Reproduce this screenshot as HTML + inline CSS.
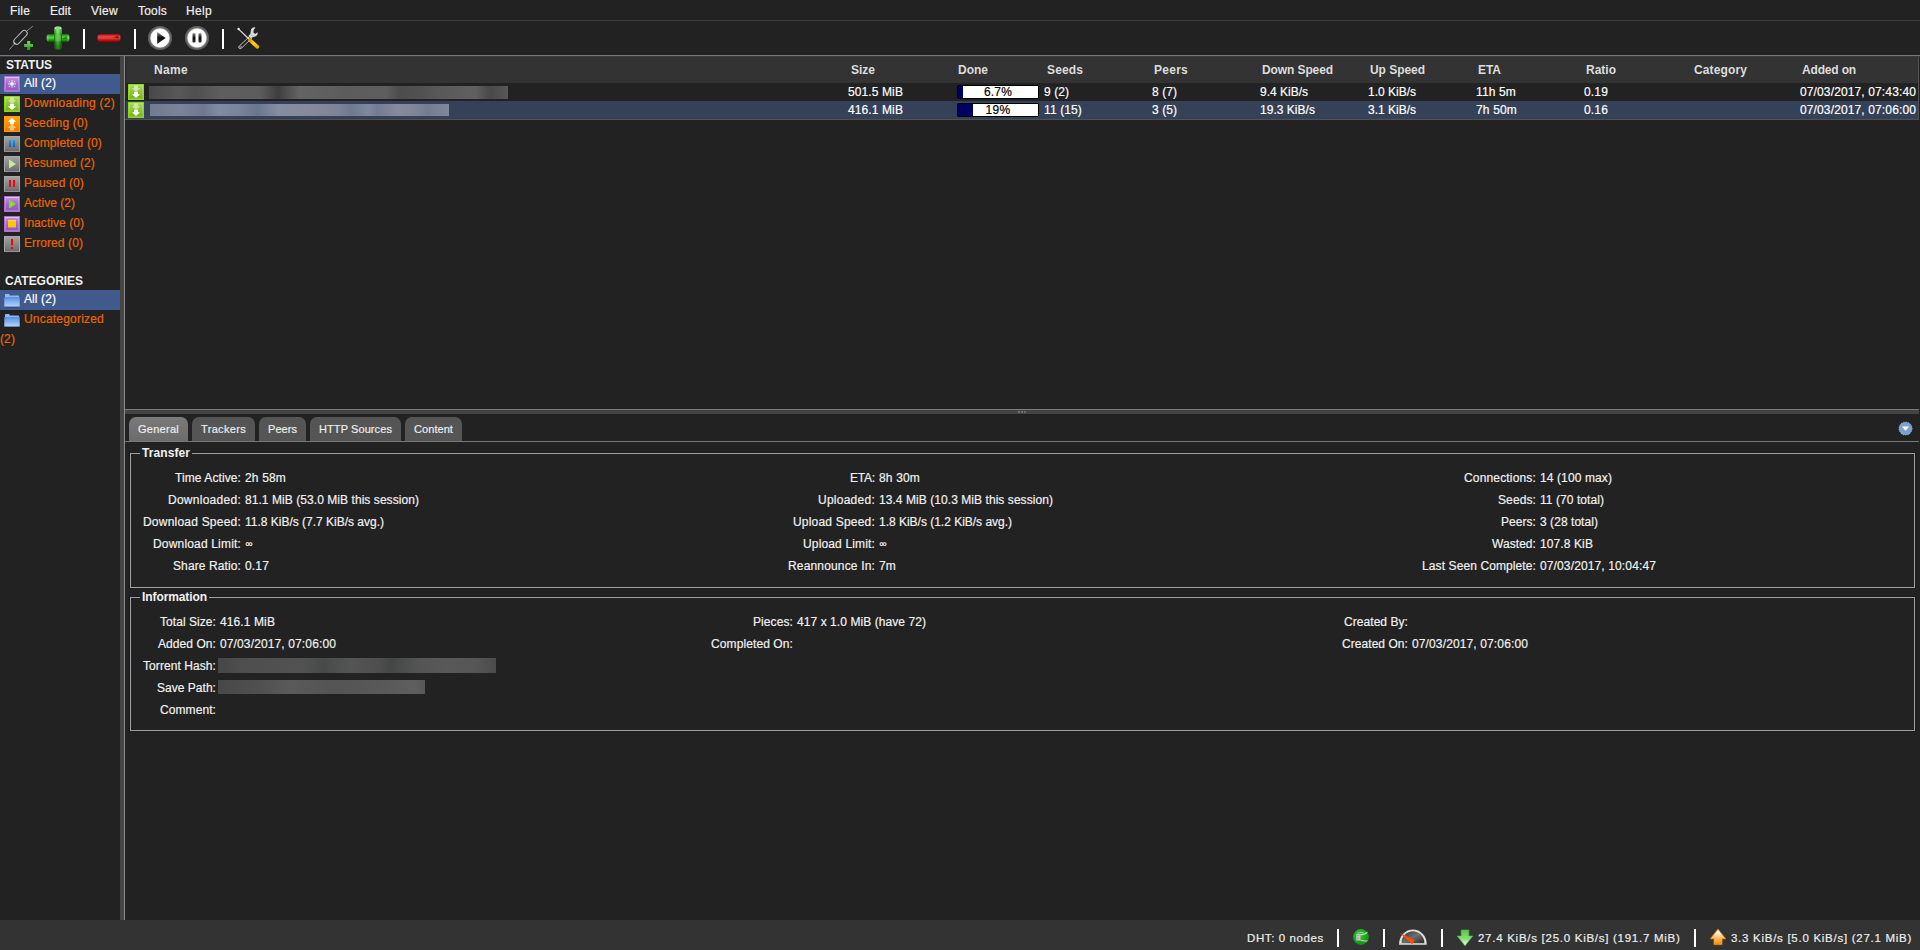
<!DOCTYPE html>
<html><head>
<meta charset="utf-8">
<title>qBittorrent Web UI</title>
<style>
*{box-sizing:border-box;margin:0;padding:0}
html,body{width:1920px;height:950px;overflow:hidden;background:#222;}
body{position:relative;font-family:"Liberation Sans",sans-serif;font-size:12px;color:#eee;line-height:16px;-webkit-text-stroke:0.18px;}
.abs{position:absolute}
/* menu */
#menubar{position:absolute;left:0;top:0;width:1920px;height:20px;background:#222;}
#menubar span{position:absolute;top:4px;color:#f0f0f0;font-size:12px;line-height:14px;white-space:nowrap}
#menuline{position:absolute;left:0;top:20px;width:1920px;height:1px;background:#3e3e3e}
#toolbar{position:absolute;left:0;top:21px;width:1920px;height:34px;background:#222}
.tdiv{position:absolute;top:29px;width:2px;height:20px;background:#fff}
#topline{z-index:5;position:absolute;left:0;top:55px;width:1920px;height:1px;background:#767676;box-shadow:0 1px 0 #3a3a3a}
/* sidebar */
#sidebar{position:absolute;left:0;top:56px;width:120px;height:864px;background:#222}
.shead{-webkit-text-stroke:0;position:absolute;left:6px;font-weight:bold;font-size:12px;color:#f0f0f0;line-height:14px;white-space:nowrap}
.sitem{position:absolute;left:0;width:120px;height:20px;color:#ee6600;white-space:nowrap;font-size:12px;line-height:14px}
.sitem.sel{background:#415a8d;color:#fff}
.sitem .ic{position:absolute;left:4px;top:2px;width:16px;height:16px}
.sitem .tx{position:absolute;left:24px;top:2px}
/* splitters */
#vsplit{z-index:6;position:absolute;left:120px;top:56px;width:4px;height:864px;background:#454545}
#vsplit2{z-index:6;position:absolute;left:124px;top:56px;width:1px;height:864px;background:#8c8c8c}
#hsplit{position:absolute;left:125px;top:409px;width:1794px;height:1px;background:#7a7a7a}
#hsplit2{position:absolute;left:125px;top:410px;width:1794px;height:4px;background:#444}
/* table */
#thead{position:absolute;left:126px;top:56px;width:1792px;height:27px;background:#333;border-top:1px solid #3a3a3a;border-left:1px solid #2b2b2b}
#thead span{-webkit-text-stroke:0;position:absolute;top:6px;margin-left:-1px;font-weight:bold;color:#ddd;font-size:12px;line-height:14px;white-space:nowrap}
.row{position:absolute;left:126px;width:1792px;height:18px;color:#fff;font-size:12px;line-height:14px}
.row span{position:absolute;top:2px;white-space:nowrap}
.row.sel{background:#354158}
.pbar{position:absolute;top:2px;left:831px;width:82px;height:14px;border:1px solid #000;border-radius:1px;background:#fff;color:#000;font-size:12px;line-height:12px;text-align:center}
.pbar i{position:absolute;left:0;top:0;height:12px;background:#000060}
.pbar b{position:absolute;left:0;top:0;width:80px;font-weight:normal;text-align:center}
.blur{position:absolute;filter:blur(1.2px)}
/* tabs */
.tab{position:absolute;top:417px;height:24px;border-radius:7px 7px 0 0;background:#555;color:#eee;font-size:11px;line-height:24px;text-align:center;white-space:nowrap}
.tab.sel{background:linear-gradient(#7a7a7a,#6c6c6c)}
#tabline{position:absolute;left:125px;top:441px;width:1794px;height:1px;background:#777}
/* fieldsets */
.fs{position:absolute;left:129px;width:1787px;border:1px solid #1b1b1b}
.fs:before{content:"";position:absolute;left:0;top:0;right:0;bottom:0;border:1px solid #a2a2a2}
.lg{-webkit-text-stroke:0;position:absolute;font-weight:bold;background:#222;padding:0 2px;color:#f2f2f2;font-size:12px;line-height:14px;white-space:nowrap}
.kv{position:absolute;white-space:nowrap;color:#f2f2f2;font-size:12px;line-height:14px}
.k{text-align:right}
/* footer */
#footer{position:absolute;left:0;top:920px;width:1920px;height:30px;background:#333}
.fdiv{position:absolute;top:929px;width:2px;height:18px;background:#fff}
.ft{position:absolute;top:931px;color:#eee;font-size:11.5px;line-height:14px;white-space:nowrap}
</style>
</head>
<body>

<svg width="0" height="0" style="position:absolute">
<defs>
<linearGradient id="pu" x1="0" y1="0" x2="0" y2="1"><stop offset="0" stop-color="#c692e6"></stop><stop offset="0.5" stop-color="#a468d0"></stop><stop offset="1" stop-color="#8e58ba"></stop></linearGradient>
<linearGradient id="gr" x1="0" y1="0" x2="0" y2="1"><stop offset="0" stop-color="#a8d85a"></stop><stop offset="1" stop-color="#72b214"></stop></linearGradient>
<linearGradient id="or" x1="0" y1="0" x2="0" y2="1"><stop offset="0" stop-color="#ffa60a"></stop><stop offset="1" stop-color="#f07a00"></stop></linearGradient>
<linearGradient id="gy2" x1="0" y1="0" x2="0" y2="1"><stop offset="0" stop-color="#a2a2a2"></stop><stop offset="1" stop-color="#6e6e6e"></stop></linearGradient>
<linearGradient id="bl2" x1="0" y1="0" x2="0" y2="1"><stop offset="0" stop-color="#00a8ff"></stop><stop offset="1" stop-color="#0058e0"></stop></linearGradient>
<linearGradient id="fo" x1="0" y1="0" x2="0" y2="1"><stop offset="0" stop-color="#5a8fe0"></stop><stop offset="1" stop-color="#b2d6ff"></stop></linearGradient>
<g id="sqpu"><rect x="0" y="0" width="16" height="16" fill="#b26cd4"></rect><rect x="1" y="1" width="14" height="14" fill="url(#pu)"></rect><rect x="1.5" y="1.5" width="13" height="13" fill="none" stroke="#fff" stroke-width="1" opacity="0.22"></rect><rect x="1" y="1" width="14" height="1" fill="#fff" opacity="0.3"></rect></g>
<g id="sqgr"><rect x="0" y="0" width="16" height="16" fill="#8cd812"></rect><rect x="1" y="1" width="14" height="14" fill="url(#gr)"></rect><rect x="1.5" y="1.5" width="13" height="13" fill="none" stroke="#fff" stroke-width="1" opacity="0.18"></rect></g>
<g id="sqor"><rect x="0" y="0" width="16" height="16" fill="#ff9c0c"></rect><rect x="1" y="1" width="14" height="14" fill="url(#or)"></rect></g>
<g id="sqgy"><rect x="0" y="0" width="16" height="16" fill="#a8a8a8"></rect><rect x="1" y="1" width="14" height="14" fill="url(#gy2)"></rect><rect x="0" y="15" width="16" height="1" fill="#929292"></rect></g>
<path id="arr" d="M6 0 h4 v2.5 h2.2 l-4.2 3.9 l-4.2 -3.9 h2.2z"></path>
<g id="i_dl"><use href="#sqgr"></use><use href="#arr" x="0" y="1.5" fill="#fff" opacity="0.5"></use><use href="#arr" x="0" y="7.7" fill="#fff"></use></g>
<g id="i_folder"><path d="M1 1.2 q0 -0.7 0.7 -0.7 h3 q0.7 0 0.9 0.7 l0.2 0.8 h8.6 q0.7 0 0.7 0.7 v1 h-14.1z" fill="#8db8f2"></path><rect x="0.3" y="3.6" width="15.4" height="9.6" rx="0.6" fill="url(#fo)"></rect><rect x="0.6" y="13.2" width="14.8" height="0.6" fill="#161616" opacity="0.6"></rect></g>
</defs>
</svg>
<!--MENUBAR-->
<div id="menubar">
<span style="left: 10px; letter-spacing: 0.164px;">File</span><span style="left: 50px; letter-spacing: 0.078px;">Edit</span><span style="left: 91px; letter-spacing: 0.301px;">View</span><span style="left: 138px; letter-spacing: 0.197px;">Tools</span><span style="left: 186px; letter-spacing: 0.328px;">Help</span>
</div>
<div id="menuline"></div>
<div id="toolbar"></div>
<!--TOOLBARICONS-->
<svg class="abs" style="left:9px;top:26px" width="24" height="24" viewBox="0 0 24 24">
<defs><linearGradient id="gsm" x1="0" y1="0" x2="0" y2="1"><stop offset="0" stop-color="#7fd96a"></stop><stop offset="1" stop-color="#1f9a12"></stop></linearGradient></defs>
<g filter="url(#bl)"><line x1="0.3" y1="23.7" x2="5.6" y2="17.6" stroke="#8e8e8e" stroke-width="1"></line><line x1="17.4" y1="5.3" x2="23.8" y2="0.2" stroke="#8e8e8e" stroke-width="1"></line>
<rect x="-8.4" y="-2.9" width="16.8" height="5.8" rx="2.9" fill="none" stroke="#b6b6b6" stroke-width="1.05" transform="translate(11.5,11.3) rotate(-46)"></rect><circle cx="5.6" cy="17.4" r="0.9" fill="#c8c8c8"></circle></g>
<path d="M18.2 15 h3 v3 h3 v3 h-3 v3.2 h-3 v-3.2 h-3.1 v-3 h3.1z" fill="url(#gsm)"></path>
</svg>
<svg class="abs" style="left:46px;top:26px" width="24" height="24" viewBox="0 0 24 24">
<defs>
<linearGradient id="gpv" x1="0" y1="0" x2="1" y2="0"><stop offset="0" stop-color="#0a7205"></stop><stop offset="0.32" stop-color="#4fbe3a"></stop><stop offset="0.5" stop-color="#72d456"></stop><stop offset="0.68" stop-color="#44b630"></stop><stop offset="1" stop-color="#086c03"></stop></linearGradient>
<linearGradient id="gpo" x1="0" y1="0" x2="0" y2="1"><stop offset="0" stop-color="#fff" stop-opacity="0.4"></stop><stop offset="0.3" stop-color="#fff" stop-opacity="0.12"></stop><stop offset="0.5" stop-color="#000" stop-opacity="0"></stop><stop offset="1" stop-color="#003c00" stop-opacity="0.6"></stop></linearGradient>
<linearGradient id="gp2" x1="0" y1="0" x2="0" y2="1"><stop offset="0" stop-color="#0a6e05"></stop><stop offset="0.3" stop-color="#4cba3a"></stop><stop offset="0.5" stop-color="#60c84a"></stop><stop offset="0.72" stop-color="#289c1a"></stop><stop offset="1" stop-color="#065e01"></stop></linearGradient>
<linearGradient id="gpo2" x1="0" y1="0" x2="1" y2="0"><stop offset="0" stop-color="#fff" stop-opacity="0.25"></stop><stop offset="0.12" stop-color="#fff" stop-opacity="0"></stop><stop offset="0.88" stop-color="#fff" stop-opacity="0"></stop><stop offset="1" stop-color="#fff" stop-opacity="0.3"></stop></linearGradient>
</defs>
<g filter="url(#bl)">
<rect x="0.7" y="8" width="22.6" height="7.9" rx="2.9" fill="url(#gp2)"></rect>
<rect x="0.7" y="8" width="22.6" height="7.9" rx="2.9" fill="url(#gpo2)"></rect>
<rect x="8.1" y="0.4" width="7.9" height="22.9" rx="2.9" fill="url(#gpv)"></rect>
<rect x="8.1" y="0.4" width="7.9" height="22.9" rx="2.9" fill="url(#gpo)"></rect>
<rect x="9" y="9" width="6" height="6" fill="#66cc50" opacity="0.55"></rect>
<path d="M15.5 12.8 L20.8 10.4 L20.8 13.4z" fill="#078600" opacity="0.9"></path>
<circle cx="9.6" cy="1.9" r="0.9" fill="#e8ffe0" opacity="0.7"></circle><circle cx="14.4" cy="1.9" r="0.9" fill="#e8ffe0" opacity="0.7"></circle>
</g>
</svg>
<svg class="abs" style="left:97px;top:33px" width="24" height="10" viewBox="0 0 24 10">
<defs><linearGradient id="gm" x1="0" y1="0" x2="0" y2="1"><stop offset="0" stop-color="#8c0505"></stop><stop offset="0.3" stop-color="#e04646"></stop><stop offset="0.55" stop-color="#e23c3c"></stop><stop offset="0.75" stop-color="#c81010"></stop><stop offset="1" stop-color="#8a0000"></stop></linearGradient></defs>
<rect x="0.6" y="0.9" width="22.8" height="8" rx="2.8" fill="url(#gm)"></rect>
<path d="M16 4.6 L21.5 2.6 L21.5 5.4z" fill="#9a0000" opacity="0.85"></path>
</svg>
<svg class="abs" style="left:147px;top:25px" width="26" height="26" viewBox="0 0 26 26">
<defs><linearGradient id="gt" x1="0" y1="0" x2="0" y2="1"><stop offset="0" stop-color="#888"></stop><stop offset="0.5" stop-color="#0a0a0a"></stop><stop offset="1" stop-color="#333"></stop></linearGradient>
<filter id="bl"><feGaussianBlur stdDeviation="0.35"></feGaussianBlur></filter><radialGradient id="gring" cx="0.5" cy="0.5" r="0.5"><stop offset="0" stop-color="#fff"></stop><stop offset="0.66" stop-color="#fff"></stop><stop offset="0.73" stop-color="#e6e6e6"></stop><stop offset="0.79" stop-color="#808080"></stop><stop offset="0.86" stop-color="#626262"></stop><stop offset="0.92" stop-color="#5a5a5a"></stop><stop offset="0.96" stop-color="#444"></stop><stop offset="1" stop-color="#222" stop-opacity="0"></stop></radialGradient></defs>
<circle cx="13" cy="13" r="12.6" fill="url(#gring)"></circle>
<g filter="url(#bl)"><path d="M10.2 7 L18.6 13 L10.2 19z" fill="url(#gt)"></path></g>
</svg>
<svg class="abs" style="left:184px;top:25px" width="26" height="26" viewBox="0 0 26 26">
<circle cx="13" cy="13" r="12.6" fill="url(#gring)"></circle>
<g filter="url(#bl)"><rect x="8.5" y="8.3" width="3" height="9.2" rx="0.8" fill="url(#gt)"></rect><rect x="14.5" y="8.3" width="3" height="9.2" rx="0.8" fill="url(#gt)"></rect></g>
</svg>
<svg class="abs" style="left:236px;top:26px" width="24" height="24" viewBox="0 0 24 24">
<defs><linearGradient id="gy" x1="0" y1="0" x2="1" y2="1"><stop offset="0" stop-color="#e0a400"></stop><stop offset="0.5" stop-color="#f8d21a"></stop><stop offset="1" stop-color="#e6b000"></stop></linearGradient></defs>
<g filter="url(#bl)">
<path d="M14.6 9.6 L3.3 20 C2.3 21 2.5 22.2 3.5 22.5 C4.4 22.8 5.1 22.5 5.8 21.9 L16.4 11.6" fill="none" stroke="#bdbdbd" stroke-width="1"></path>
<circle cx="4.5" cy="20.9" r="0.95" fill="none" stroke="#bdbdbd" stroke-width="0.7"></circle>
<path d="M19.4 1.4 C17 0.9 15 2.4 14.8 4.8 L14.4 8 L12.4 10 L14.4 12.4 L16.8 11 C18.6 11.2 20.6 10.4 21.4 8.6 C21.8 7.6 21.7 6.8 21.5 6.2 L19.2 8 L17.4 6.6 L17.6 4.2z" fill="#dadada"></path>
<path d="M15.4 9 L16.6 10.2" stroke="#888" stroke-width="0.6"></path>
<line x1="2.9" y1="3.4" x2="13" y2="13" stroke="#dcdcdc" stroke-width="1.25" stroke-linecap="round"></line>
<circle cx="2.6" cy="3" r="1.25" fill="#e8e8e8"></circle>
<line x1="14" y1="14.2" x2="21.4" y2="20.8" stroke="url(#gy)" stroke-width="3.6" stroke-linecap="round"></line>
</g>
</svg>
<!--ENDTOOLBARICONS-->
<div class="tdiv" style="left:83px"></div>
<div class="tdiv" style="left:134px"></div>
<div class="tdiv" style="left:222px"></div>
<div id="topline"></div>
<!--SIDEBAR-->
<div id="sidebar">
<div class="shead" style="top: 2px; letter-spacing: -0.036px;">STATUS</div>
<div class="sitem sel" style="top:18px"><svg class="ic" viewBox="0 0 16 16"><use href="#sqpu"></use><g stroke="#fff" stroke-width="1" opacity="0.75"><line x1="8" y1="4" x2="8" y2="11.8"></line><line x1="4" y1="7.9" x2="12" y2="7.9"></line></g><g fill="#fff" opacity="0.7"><circle cx="5.4" cy="5.5" r="0.75"></circle><circle cx="10.5" cy="5.5" r="0.75"></circle><circle cx="5.4" cy="10.5" r="0.75"></circle><circle cx="10.5" cy="10.5" r="0.75"></circle></g><circle cx="7.95" cy="7.9" r="1.7" fill="#fff"></circle></svg><span class="tx" style="letter-spacing: 0.094px;">All (2)</span></div>
<div class="sitem" style="top:38px"><svg class="ic" viewBox="0 0 16 16"><use href="#i_dl"></use></svg><span class="tx" style="letter-spacing: 0.241px;">Downloading (2)</span></div>
<div class="sitem" style="top:58px"><svg class="ic" viewBox="0 0 16 16"><use href="#sqor"></use><g transform="translate(16,16) rotate(180)"><use href="#arr" x="0" y="1.5" fill="#fff" opacity="0.5"></use><use href="#arr" x="0" y="7.7" fill="#fff"></use></g></svg><span class="tx" style="letter-spacing: 0.178px;">Seeding (0)</span></div>
<div class="sitem" style="top:78px"><svg class="ic" viewBox="0 0 16 16"><use href="#sqgy"></use><rect x="5" y="4" width="2" height="7" fill="url(#bl2)"></rect><rect x="9" y="4" width="2" height="7" fill="url(#bl2)"></rect></svg><span class="tx" style="letter-spacing: 0.151px;">Completed (0)</span></div>
<div class="sitem" style="top:98px"><svg class="ic" viewBox="0 0 16 16"><use href="#sqgy"></use><path d="M5 3.2 L12 8 L5 12.6z" fill="#c6e69c"></path><circle cx="7.6" cy="8" r="0.8" fill="#e8f6d8"></circle></svg><span class="tx" style="letter-spacing: 0.149px;">Resumed (2)</span></div>
<div class="sitem" style="top:118px"><svg class="ic" viewBox="0 0 16 16"><use href="#sqgy"></use><rect x="5" y="4" width="2" height="7" fill="#ff0000"></rect><rect x="9" y="4" width="2" height="7" fill="#ff0000"></rect></svg><span class="tx" style="letter-spacing: 0.13px;">Paused (0)</span></div>
<div class="sitem" style="top:138px"><svg class="ic" viewBox="0 0 16 16"><use href="#sqpu"></use><path d="M5 3.2 L12 8 L5 12.6z" fill="#82e010"></path><circle cx="7.6" cy="8" r="0.8" fill="#b8f070"></circle></svg><span class="tx" style="letter-spacing: 0.031px;">Active (2)</span></div>
<div class="sitem" style="top:158px"><svg class="ic" viewBox="0 0 16 16"><use href="#sqpu"></use><rect x="4" y="4" width="8" height="7.4" fill="#ffc800"></rect><rect x="4" y="4" width="8" height="1" fill="#ffd84a"></rect></svg><span class="tx" style="letter-spacing: 0.053px;">Inactive (0)</span></div>
<div class="sitem" style="top:178px"><svg class="ic" viewBox="0 0 16 16"><use href="#sqgy"></use><rect x="7" y="3" width="2" height="6.2" fill="#ff0000"></rect><rect x="7" y="11" width="2" height="2" fill="#ff0000"></rect></svg><span class="tx" style="letter-spacing: 0.089px;">Errored (0)</span></div>
<div class="shead" style="top: 218px; left: 5px; letter-spacing: -0.045px;">CATEGORIES</div>
<div class="sitem sel" style="top:234px"><svg class="ic" viewBox="0 0 16 16" style="top:3px"><use href="#i_folder" y="0.5"></use></svg><span class="tx" style="letter-spacing: 0.094px;">All (2)</span></div>
<div class="sitem" style="top:254px"><svg class="ic" viewBox="0 0 16 16" style="top:3px"><use href="#i_folder" y="0.5"></use></svg><span class="tx" style="letter-spacing: 0.201px;">Uncategorized</span></div>
<div class="sitem" style="top:274px"><span class="tx" style="left: 0px; letter-spacing: 0.109px;">(2)</span></div>
</div>
<div id="vsplit"></div><div id="vsplit2"></div>
<!--TABLE-->
<div id="thead">
<span style="left: 28px; letter-spacing: 0.328px;">Name</span>
<span style="left: 725px; letter-spacing: -0.004px;">Size</span>
<span style="left: 832px; letter-spacing: 0px;">Done</span>
<span style="left: 921px; letter-spacing: 0.128px;">Seeds</span>
<span style="left: 1028px; letter-spacing: 0.259px;">Peers</span>
<span style="left: 1136px; letter-spacing: -0.102px;">Down Speed</span>
<span style="left: 1244px; letter-spacing: -0.043px;">Up Speed</span>
<span style="left: 1352px; letter-spacing: -0.036px;">ETA</span>
<span style="left: 1460px; letter-spacing: 0px;">Ratio</span>
<span style="left: 1568px; letter-spacing: 0.123px;">Category</span>
<span style="left: 1676px; letter-spacing: -0.166px;">Added on</span>
</div>
<div class="row" style="top:83px"><svg class="abs" style="left:2px;top:1px" width="16" height="16" viewBox="0 0 16 16"><use href="#i_dl"></use></svg>
<span style="left: 722px; letter-spacing: 0.108px;">501.5 MiB</span>
<div class="pbar"><i style="width:5px"></i><b style="letter-spacing: 0.16px;">6.7%</b></div>
<span style="left: 918px; letter-spacing: 0.062px;">9 (2)</span>
<span style="left: 1026px; letter-spacing: 0.062px;">8 (7)</span>
<span style="left: 1134px; letter-spacing: -0.003px;">9.4 KiB/s</span>
<span style="left: 1242px; letter-spacing: -0.003px;">1.0 KiB/s</span>
<span style="left: 1350px; letter-spacing: 0.143px;">11h 5m</span>
<span style="left: 1458px; letter-spacing: 0.16px;">0.19</span>
<span style="left: 1674px; letter-spacing: 0.128px;">07/03/2017, 07:43:40</span>
</div>
<div class="row sel" style="top:101px"><svg class="abs" style="left:2px;top:1px" width="16" height="16" viewBox="0 0 16 16"><use href="#i_dl"></use></svg>
<span style="left: 722px; letter-spacing: 0.108px;">416.1 MiB</span>
<div class="pbar"><i style="width:15px"></i><b style="letter-spacing: 0.323px;">19%</b></div>
<span style="left: 918px; letter-spacing: 0.123px;">11 (15)</span>
<span style="left: 1026px; letter-spacing: 0.062px;">3 (5)</span>
<span style="left: 1134px; letter-spacing: 0.03px;">19.3 KiB/s</span>
<span style="left: 1242px; letter-spacing: -0.003px;">3.1 KiB/s</span>
<span style="left: 1350px; letter-spacing: 0.161px;">7h 50m</span>
<span style="left: 1458px; letter-spacing: 0.16px;">0.16</span>
<span style="left: 1674px; letter-spacing: 0.128px;">07/03/2017, 07:06:00</span>
</div>
<div class="abs" style="left:125px;top:119px;width:1794px;height:1px;background:#525252"></div>
<div class="abs" style="left:1918px;top:56px;width:1px;height:63px;background:#525252"></div>
<div class="abs" style="left:125px;top:56px;width:1px;height:63px;background:#2a2a2a"></div>
<div id="hsplit"></div><div id="hsplit2"></div>

<div class="abs" style="left:149px;top:86px;width:359px;height:13px;background:linear-gradient(90deg,#484848 0,#585858 8%,#505050 13%,#5e5e5e 20%,#5c5c5c 31%,#3e3e3e 36%,#646464 42%,#5c5c5c 55%,#5e5e5e 66%,#4c4c4c 70%,#525252 76%,#5a5a5a 82%,#606060 91%,#484848 95%,#585858 100%)"></div>
<div class="abs" style="left:150px;top:104px;width:299px;height:12px;background:linear-gradient(90deg,#737b91 0,#7a8398 10%,#6f7890 18%,#808aa0 23%,#7a839a 30%,#6a7590 36%,#858ea2 43%,#88889c 54%,#7c8498 63%,#6e7890 67%,#7f889c 73%,#747c94 76%,#88899e 83%,#7d859a 89%,#747c92 93%,#80889c 100%)"></div>
<div class="abs" style="left:218px;top:658px;width:278px;height:15px;background:linear-gradient(90deg,#464646 0,#4e4e4e 8%,#525252 30%,#484a4a 38%,#555555 48%,#4e4e4e 58%,#444646 62%,#545454 72%,#585858 82%,#565656 92%,#4c4c4c 100%)"></div>
<div class="abs" style="left:218px;top:680px;width:207px;height:14px;background:linear-gradient(90deg,#484848 0,#505050 20%,#5a5a5a 35%,#545454 55%,#585858 75%,#5e5e5e 95%,#585858 100%)"></div>
<svg class="abs" style="left:1898px;top:421px" width="15" height="15" viewBox="0 0 15 15"><circle cx="7.5" cy="7.5" r="6.6" fill="#79a2cf"></circle><circle cx="7.5" cy="7.5" r="6.6" fill="none" stroke="#dfe8f2" stroke-width="0.7" stroke-dasharray="0.8 1.6"></circle><path d="M3.8 5.6 h7.4 l-3.7 4.2z" fill="#fff"></path></svg>
<div class="abs" style="left:121px;top:485px;width:2px;height:2px;background:#363636;box-shadow:0 3px 0 #363636,0 6px 0 #363636"></div>
<div class="abs" style="left:1018px;top:411px;width:2px;height:2px;background:#6c6c6c;box-shadow:3px 0 0 #6c6c6c,6px 0 0 #6c6c6c"></div>
<!--TABS-->
<div class="tab sel" style="left: 129px; width: 59px; letter-spacing: 0.266px;">General</div>
<div class="tab" style="left: 192px; width: 63px; letter-spacing: 0.328px;">Trackers</div>
<div class="tab" style="left: 259px; width: 47px; letter-spacing: 0.05px;">Peers</div>
<div class="tab" style="left: 310px; width: 91px; letter-spacing: 0.089px;">HTTP Sources</div>
<div class="tab" style="left: 405px; width: 57px; letter-spacing: 0.067px;">Content</div>
<div id="tabline"></div>
<!--PROPS-->
<div class="fs" style="top:452px;height:137px"></div>
<div class="lg" style="left: 140px; top: 446px; letter-spacing: 0.08px;">Transfer</div>
<div class="fs" style="top:596px;height:136px"></div>
<div class="lg" style="left: 140px; top: 590px; letter-spacing: -0.091px;">Information</div>
<!--KV-->
<div class="kv k" style="right: 1679px; top: 471px; letter-spacing: 0.091px;">Time Active:</div><div class="kv" style="left: 245px; top: 471px; letter-spacing: 0.161px;">2h 58m</div>
<div class="kv k" style="right: 1679px; top: 493px; letter-spacing: 0.267px;">Downloaded:</div><div class="kv" style="left: 245px; top: 493px; letter-spacing: 0.06px;">81.1 MiB (53.0 MiB this session)</div>
<div class="kv k" style="right: 1679px; top: 515px; letter-spacing: 0.218px;">Download Speed:</div><div class="kv" style="left: 245px; top: 515px; letter-spacing: -0.006px;">11.8 KiB/s (7.7 KiB/s avg.)</div>
<div class="kv k" style="right: 1679px; top: 537px; letter-spacing: 0.175px;">Download Limit:</div><div class="kv" style="left: 245.5px; top: 536.5px; font-size: 10px; letter-spacing: 0.059px;">∞</div>
<div class="kv k" style="right: 1679px; top: 559px; letter-spacing: 0.108px;">Share Ratio:</div><div class="kv" style="left: 245px; top: 559px; letter-spacing: 0.16px;">0.17</div>
<div class="kv k" style="right: 1045px; top: 471px; letter-spacing: -0.195px;">ETA:</div><div class="kv" style="left: 879px; top: 471px; letter-spacing: 0.161px;">8h 30m</div>
<div class="kv k" style="right: 1045px; top: 493px; letter-spacing: 0.253px;">Uploaded:</div><div class="kv" style="left: 879px; top: 493px; letter-spacing: 0.06px;">13.4 MiB (10.3 MiB this session)</div>
<div class="kv k" style="right: 1045px; top: 515px; letter-spacing: 0.2px;">Upload Speed:</div><div class="kv" style="left: 879px; top: 515px; letter-spacing: -0.015px;">1.8 KiB/s (1.2 KiB/s avg.)</div>
<div class="kv k" style="right: 1045px; top: 537px; letter-spacing: 0.151px;">Upload Limit:</div><div class="kv" style="left: 879.5px; top: 536.5px; font-size: 10px; letter-spacing: 0.059px;">∞</div>
<div class="kv k" style="right: 1045px; top: 559px; letter-spacing: 0.162px;">Reannounce In:</div><div class="kv" style="left: 879px; top: 559px; letter-spacing: 0.164px;">7m</div>
<div class="kv k" style="right: 384px; top: 471px; letter-spacing: 0.163px;">Connections:</div><div class="kv" style="left: 1540px; top: 471px; letter-spacing: 0.108px;">14 (100 max)</div>
<div class="kv k" style="right: 384px; top: 493px; letter-spacing: 0.107px;">Seeds:</div><div class="kv" style="left: 1540px; top: 493px; letter-spacing: 0.065px;">11 (70 total)</div>
<div class="kv k" style="right: 384px; top: 515px; letter-spacing: 0.052px;">Peers:</div><div class="kv" style="left: 1540px; top: 515px; letter-spacing: 0.052px;">3 (28 total)</div>
<div class="kv k" style="right: 384px; top: 537px; letter-spacing: 0.06px;">Wasted:</div><div class="kv" style="left: 1540px; top: 537px; letter-spacing: 0.106px;">107.8 KiB</div>
<div class="kv k" style="right: 384px; top: 559px; letter-spacing: 0.101px;">Last Seen Complete:</div><div class="kv" style="left: 1540px; top: 559px; letter-spacing: 0.128px;">07/03/2017, 10:04:47</div>
<div class="kv k" style="right: 1704px; top: 615px; letter-spacing: 0.058px;">Total Size:</div><div class="kv" style="left: 220px; top: 615px; letter-spacing: 0.108px;">416.1 MiB</div>
<div class="kv k" style="right: 1704px; top: 637px; letter-spacing: 0.069px;">Added On:</div><div class="kv" style="left: 220px; top: 637px; letter-spacing: 0.128px;">07/03/2017, 07:06:00</div>
<div class="kv k" style="right: 1704px; top: 659px; letter-spacing: 0.075px;">Torrent Hash:</div>
<div class="kv k" style="right: 1704px; top: 681px; letter-spacing: 0.028px;">Save Path:</div>
<div class="kv k" style="right: 1704px; top: 703px; letter-spacing: 0.08px;">Comment:</div>
<div class="kv k" style="right: 1127px; top: 615px; letter-spacing: 0.092px;">Pieces:</div><div class="kv" style="left: 797px; top: 615px; letter-spacing: 0.069px;">417 x 1.0 MiB (have 72)</div>
<div class="kv k" style="right: 1127px; top: 637px; letter-spacing: 0.099px;">Completed On:</div>
<div class="kv k" style="right: 512px; top: 615px; letter-spacing: 0.057px;">Created By:</div>
<div class="kv k" style="right: 512px; top: 637px; letter-spacing: 0.057px;">Created On:</div><div class="kv" style="left: 1412px; top: 637px; letter-spacing: 0.128px;">07/03/2017, 07:06:00</div>
<!--ENDKV-->
<!--FOOTER-->
<div id="footer"></div>
<div class="ft" id="ft_dht" style="left: 1247px; letter-spacing: 0.609px;">DHT: 0 nodes</div>
<div class="fdiv" style="left:1337px"></div>
<svg class="abs" style="left:1353px;top:929px" width="16" height="16" viewBox="0 0 16 16">
<defs><radialGradient id="gc" cx="0.4" cy="0.35" r="0.7"><stop offset="0" stop-color="#3cc43c"></stop><stop offset="1" stop-color="#0a900a"></stop></radialGradient></defs>
<circle cx="8" cy="8" r="7.9" fill="url(#gc)"></circle>
<path d="M3.4 5.2 h4 v6.2 h-4z" fill="#d8d8d8"></path><path d="M4 6 h2.6 v1.6 h-2.6z M4 8.6 h2.6 v1.8 h-2.6z" fill="#a8a8a8"></path>
<path d="M7.4 5 C10 5.4 12.6 4.4 14.4 2.6 L14.6 3.6 C13 5.6 10 6.6 7.4 6.2z" fill="#dcdcdc" opacity="0.9"></path>
<path d="M7.4 10.4 C10 11.4 12.4 11.8 14.6 11.2 L14.2 12.2 C12 12.8 9.6 12.4 7.4 11.4z" fill="#dcdcdc" opacity="0.9"></path>
<path d="M4 3.8 C6 2.8 9 2.8 11 3.4 L10.4 4.2 C8.4 3.8 6 3.8 4.4 4.6z" fill="#9be09b" opacity="0.8"></path>
</svg>
<div class="fdiv" style="left:1383px"></div>
<svg class="abs" style="left:1398px;top:928px" width="30" height="18" viewBox="0 0 30 18">
<defs><linearGradient id="gd" x1="0" y1="0" x2="1" y2="1"><stop offset="0" stop-color="#333"></stop><stop offset="0.5" stop-color="#6e6e6e"></stop><stop offset="1" stop-color="#2a2a2a"></stop></linearGradient></defs>
<path d="M1 16 A13.9 14.6 0 0 1 28.8 16 L28.8 16.8 L1 16.8z" fill="#cfcfcf"></path>
<path d="M1.8 15.8 A13.1 13.8 0 0 1 28 15.8z" fill="#f2f2f2"></path>
<path d="M3.4 15.2 A11.5 12 0 0 1 26.4 15.2z" fill="url(#gd)"></path>
<path d="M2.5 15.5 A12.4 13 0 0 1 27.3 15.5" fill="none" stroke="#8a8a8a" stroke-width="0.9" stroke-dasharray="0.7 1.9" opacity="0.7"></path>
<path d="M1.4 4.6 L16.6 12.2 L14.2 16.4z" fill="#ff4a08"></path>
<rect x="2.4" y="15.9" width="25" height="0.9" fill="#b8b8b8"></rect>
</svg>
<div class="fdiv" style="left:1441px"></div>
<svg class="abs" style="left:1457px;top:929px" width="16" height="18" viewBox="0 0 16 18">
<defs><linearGradient id="gda" x1="0" y1="0" x2="0" y2="1"><stop offset="0" stop-color="#5cc84c"></stop><stop offset="0.55" stop-color="#86dc78"></stop><stop offset="1" stop-color="#f4fff0"></stop></linearGradient></defs>
<path d="M4.2 1 h7.6 v6 h4 l-7.8 9.8 l-7.8 -9.8 h4z" fill="url(#gda)" stroke="#52c044" stroke-width="0.6"></path>
</svg>
<div class="ft" id="ft_dl" style="left: 1478px; letter-spacing: 0.727px;">27.4 KiB/s [25.0 KiB/s] (191.7 MiB)</div>
<div class="fdiv" style="left:1694px"></div>
<svg class="abs" style="left:1710px;top:928px" width="16" height="18" viewBox="0 0 16 18">
<defs><linearGradient id="gua" x1="0" y1="0" x2="0" y2="1"><stop offset="0" stop-color="#fff"></stop><stop offset="0.2" stop-color="#fff4e4"></stop><stop offset="0.6" stop-color="#ffb85c"></stop><stop offset="1" stop-color="#ff8a00"></stop></linearGradient></defs>
<path d="M8 1.2 l7.6 9.6 h-3.6 v5.8 h-8 v-5.8 h-3.6z" fill="url(#gua)" stroke="#ff9410" stroke-width="0.7"></path>
</svg>
<div class="ft" id="ft_ul" style="left: 1731px; letter-spacing: 0.723px;">3.3 KiB/s [5.0 KiB/s] (27.1 MiB)</div>



</body></html>
